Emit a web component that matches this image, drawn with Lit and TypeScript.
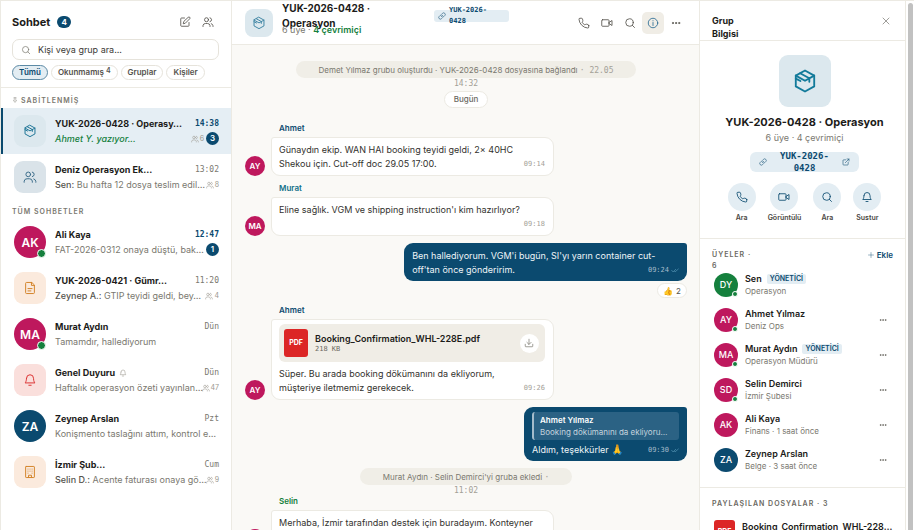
import { LitElement, html, css, svg, nothing, TemplateResult } from "lit";
import { customElement } from "lit/decorators.js";
import { classMap } from "lit/directives/class-map.js";

const paths: Record<string, TemplateResult> = {
  box: svg`<path d="M12 2.300 20.500 7v10L12 21.700 3.500 17V7z"/><path d="M3.500 7 12 11.800 20.500 7M7.500 4.800 16 9.500v3.200M3.500 9.800 7.800 12"/>`,
  edit: svg`<path d="M11 4H5a1.500 1.500 0 0 0-1.500 1.500V19A1.500 1.500 0 0 0 5 20.500h13.500A1.500 1.500 0 0 0 20 19v-6"/><path d="M18.500 2.500a2.100 2.100 0 0 1 3 3L12.500 14.500 8.500 15.500 9.500 11.500z"/>`,
  users: svg`<circle cx="9" cy="7.500" r="4"/><path d="M2 21v-2a5 5 0 0 1 5-4h4a5 5 0 0 1 5 4v2M16 3.600a4 4 0 0 1 0 7.800M18.500 15.300A5 5 0 0 1 22 19.500V21"/>`,
  search: svg`<circle cx="11" cy="11" r="7.500"/><path d="m16.500 16.500 4.500 4.500"/>`,
  pin: svg`<path d="M12 17v5M8 3h8M9 3v7l-3 4v2h12v-2l-3-4V3"/>`,
  doc: svg`<path d="M14.500 2.500H6A1.500 1.500 0 0 0 4.500 4v16A1.500 1.500 0 0 0 6 21.500h12a1.500 1.500 0 0 0 1.500-1.500V7.500z"/><path d="M14.500 2.500v5h5M8.500 13h7M8.500 17h5"/>`,
  bell: svg`<path d="M6 9a6 6 0 0 1 12 0c0 6 2.500 8 2.500 8h-17S6 15 6 9M10 21h4"/>`,
  building: svg`<rect x="4.500" y="2.500" width="15" height="19" rx="1"/><path d="M9.500 21v-3.500h5V21M8.500 7h.1M12 7h.1M15.500 7h.1M8.500 10.500h.1M12 10.500h.1M15.500 10.500h.1M8.500 14h.1M15.500 14h.1"/>`,
  phone: svg`<path d="M21.500 17v3a2 2 0 0 1-2.200 2A19 19 0 0 1 2 4.700 2 2 0 0 1 4 2.500h3a2 2 0 0 1 2 1.700c.1 1 .4 1.900.7 2.800a2 2 0 0 1-.5 2.100L8 10.300a16 16 0 0 0 5.800 5.700l1.200-1.200a2 2 0 0 1 2.100-.4c.9.300 1.800.5 2.800.700a2 2 0 0 1 1.600 1.900z"/>`,
  video: svg`<rect x="1.500" y="5.500" width="14.500" height="13" rx="1.500"/><path d="m16 11 6-4v10l-6-4z"/>`,
  info: svg`<circle cx="12" cy="12" r="9.500"/><path d="M12 11v6M12 7.300v.4"/>`,
  dots: svg`<g fill="currentColor"><circle cx="4.500" cy="12" r="1.500"/><circle cx="12" cy="12" r="1.500"/><circle cx="19.500" cy="12" r="1.500"/></g>`,
  link: svg`<path d="M10 13.500a5 5 0 0 0 7.300.3l3-3a4.800 4.800 0 0 0-6.800-6.800L12 5.500M14 10.500a5 5 0 0 0-7.300-.3l-3 3a4.800 4.800 0 0 0 6.800 6.800l1.500-1.500"/>`,
  external: svg`<path d="M18.500 13v6a2 2 0 0 1-2 2H5a2 2 0 0 1-2-2V7.500a2 2 0 0 1 2-2h6M15 3h6v6M10 14 21 3"/>`,
  download: svg`<path d="M21 15v4.500a1.500 1.500 0 0 1-1.500 1.500h-15A1.500 1.500 0 0 1 3 19.500V15M7 10.500l5 5 5-5M12 15V3"/>`,
  close: svg`<path d="M3 3l18 18M21 3 3 21"/>`,
  plus: svg`<path d="M12 2v20M2 12h20"/>`,
  checks: svg`<path d="m2 13 4.500 5L14 10M11 17l1 1 10-9"/>`,
};

const icon = (name: string, size: string) =>
  html`<svg class="i ${size}" viewBox="0 0 24 24" aria-hidden="true">${paths[name]}</svg>`;

const shared = css`
  *, *::after { box-sizing: border-box; }
  button { font: inherit; color: inherit; border: 0; background: none; padding: 0; margin: 0; cursor: pointer; }
  a { color: inherit; text-decoration: none; }
  h1, h2, h3, p, ul { margin: 0; padding: 0; font: inherit; list-style: none; }
  .i { display: block; flex: none; fill: none; stroke: currentColor; stroke-width: 1.7; stroke-linecap: round; stroke-linejoin: round; }
  .s6 { width: 6px; height: 6px; }
  .s8 { width: 8px; height: 8px; }
  .s10 { width: 10px; height: 10px; }
  .s12 { width: 12px; height: 12px; }
  .s14 { width: 14px; height: 14px; }
  .s26 { width: 26px; height: 26px; }
  .mono { font-family: "DejaVu Sans Mono", "Liberation Mono", monospace; }
  .ava { position: relative; display: grid; place-items: center; flex: none; border-radius: 50%; color: #fff; font-weight: 600; background: #be185d; }
  .navy { background: #0b4a6f; }
  .green { background: #15803d; }
  .on::after { content: ""; position: absolute; right: 0; bottom: 0; width: 9px; height: 9px; border-radius: 50%; border: 1px solid #fff; background: #15803d; }
  .ell { overflow: hidden; white-space: nowrap; text-overflow: ellipsis; }
`;

interface Chat {
  name: string; time: string; text: string; who?: string; initials?: string; tone?: string;
  icon?: string; online?: boolean; members?: number; unread?: number; active?: boolean; muted?: boolean;
}

const pinned: Chat[] = [
  { name: "YUK-2026-0428 · Operasy…", time: "14:38", text: "Ahmet Y. yazıyor...", icon: "box", tone: "teal", members: 6, unread: 3, active: true },
  { name: "Deniz Operasyon Ek…", time: "13:02", who: "Sen:", text: "Bu hafta 12 dosya teslim edil…", icon: "users", tone: "slate", members: 8 },
];
const chats: Chat[] = [
  { name: "Ali Kaya", time: "12:47", text: "FAT-2026-0312 onaya düştü, bak…", initials: "AK", tone: "", online: true, unread: 1 },
  { name: "YUK-2026-0421 · Gümr…", time: "11:20", who: "Zeynep A.:", text: "GTIP teyidi geldi, bey…", icon: "doc", tone: "amber", members: 4 },
  { name: "Murat Aydın", time: "Dün", text: "Tamamdır, hallediyorum", initials: "MA", tone: "", online: true },
  { name: "Genel Duyuru", time: "Dün", text: "Haftalık operasyon özeti yayınlan…", icon: "bell", tone: "rose", members: 47, muted: true },
  { name: "Zeynep Arslan", time: "Pzt", text: "Konişmento taslağını attım, kontrol e…", initials: "ZA", tone: "navy" },
  { name: "İzmir Şub…", time: "Cum", who: "Selin D.:", text: "Acente faturası onaya gö…", icon: "building", tone: "amber", members: 9 },
];

@customElement("chat-list")
export class ChatList extends LitElement {
  static styles = [shared, css`
    :host { display: block; background: #fff; border-right: 1px solid #eceae3; overflow: hidden; }
    .top { padding: 10px 12px 7px 11px; border-bottom: 1px solid #eceae3; }
    .head { display: flex; align-items: center; height: 22px; }
    h1 { font-size: 11px; font-weight: 700; }
    .count { margin-left: 7px; width: 14px; height: 12px; line-height: 12px; border-radius: 6px; background: #0b4a6f; color: #fff; font-size: 8px; font-weight: 700; text-align: center; }
    .tools { margin-left: auto; display: flex; gap: 1px; color: #55534d; }
    .tools button { width: 22px; height: 22px; display: grid; place-items: center; }
    .search { margin-top: 6px; height: 21px; display: flex; align-items: center; gap: 7px; padding: 0 8px; border: 1px solid #e6e3db; border-radius: 7px; color: #7a786f; }
    input { flex: 1; min-width: 0; border: 0; outline: 0; padding: 0; background: none; font: 9px Inter, sans-serif; color: #1c1b19; }
    input::placeholder { color: #3b3a36; opacity: 1; }
    .chips { display: flex; gap: 3px; margin-top: 5px; }
    .chips button { height: 15px; padding: 0 6px; border: 1px solid #e6e3db; border-radius: 8px; font-size: 8px; line-height: 13px; font-weight: 600; color: #55534d; white-space: nowrap; }
    .chips .sel { background: #e3edf3; border-color: #5c8aa5; color: #0b4a6f; }
    sup { font-size: 7px; line-height: 0; vertical-align: 2px; }
    .label { display: flex; align-items: center; gap: 3px; height: 20px; padding: 4px 11px 0; font-size: 7px; font-weight: 600; letter-spacing: 1px; color: #7a786f; }
    .label.next { height: 19px; }
    .row { display: flex; align-items: center; gap: 9px; width: 100%; height: 46px; padding: 0 12px 0 13px; text-align: left; }
    .active { background: #e5eef4; box-shadow: inset 2px 0 #0b4a6f; }
    .pic { width: 32px; height: 32px; display: grid; place-items: center; flex: none; border-radius: 9px; font-size: 12px; }
    .pic.ava { border-radius: 50%; }
    .teal { background: #dce8ee; color: #1f7597; }
    .slate { background: #dae3e9; color: #3b6c8a; }
    .amber { background: #fbeadd; color: #d3852a; }
    .rose { background: #fadfdc; color: #dc3434; }
    .body { flex: 1; min-width: 0; }
    .line { display: flex; align-items: center; height: 15px; gap: 2px; white-space: nowrap; }
    .name { font-size: 9px; font-weight: 700; color: #1c1b19; }
    .time { margin-left: auto; font-size: 8px; color: #7a786f; }
    .time.new { color: #0b4a6f; font-weight: 700; }
    .msg { flex: 1; font-size: 9px; color: #7a786f; min-width: 0; }
    .msg b { font-weight: 500; color: #55534d; }
    .active .msg { color: #15803d; font-style: italic; font-weight: 500; }
    .mem { display: flex; align-items: center; gap: 1px; font-size: 7px; color: #9b988f; }
    .unread { width: 13px; height: 13px; line-height: 13px; border-radius: 50%; background: #0b4a6f; color: #fff; font-size: 8px; font-weight: 600; text-align: center; }
    .muted { margin-left: 2px; color: #9b988f; }
  `];

  private row(c: Chat) {
    return html`<li><button class=${classMap({ row: true, active: !!c.active })}>
      ${c.icon
        ? html`<span class="pic ${c.tone}">${icon(c.icon, "s14")}</span>`
        : html`<span class="pic ava ${c.tone} ${c.online ? "on" : ""}">${c.initials}</span>`}
      <span class="body">
        <span class="line"><span class="name">${c.name}</span>${c.muted ? html`<span class="muted">${icon("bell", "s8")}</span>` : nothing}
          <span class="time mono ${c.unread ? "new" : ""}">${c.time}</span></span>
        <span class="line"><span class="msg">${c.who ? html`<b>${c.who}</b> ` : nothing}${c.text}</span>
          ${c.members ? html`<span class="mem">${icon("users", "s8")}${c.members}</span>` : nothing}
          ${c.unread ? html`<span class="unread">${c.unread}</span>` : nothing}</span>
      </span>
    </button></li>`;
  }

  render() {
    return html`
      <div class="top">
        <div class="head"><h1>Sohbet</h1><span class="count">4</span>
          <div class="tools"><button aria-label="Yeni sohbet">${icon("edit", "s12")}</button><button aria-label="Yeni grup">${icon("users", "s12")}</button></div>
        </div>
        <label class="search">${icon("search", "s10")}<input type="search" aria-label="Kişi veya grup ara" placeholder="Kişi veya grup ara..." /></label>
        <div class="chips"><button class="sel">Tümü</button><button>Okunmamış <sup>4</sup></button><button>Gruplar</button><button>Kişiler</button></div>
      </div>
      <h2 class="label">${icon("pin", "s6")}SABİTLENMİŞ</h2>
      <ul>${pinned.map((c) => this.row(c))}</ul>
      <h2 class="label next">TÜM SOHBETLER</h2>
      <ul>${chats.map((c) => this.row(c))}</ul>`;
  }
}

@customElement("chat-thread")
export class ChatThread extends LitElement {
  static styles = [shared, css`
    :host { display: flex; flex-direction: column; min-width: 0; background: #faf9f6; overflow: hidden; }
    header { display: flex; align-items: center; gap: 9px; height: 44px; flex: none; padding: 0 12px 0 13px; background: #fff; border-bottom: 1px solid #eceae3; }
    .pic { width: 28px; height: 28px; flex: none; display: grid; place-items: center; border-radius: 8px; background: #dce8ee; color: #4388a5; }
    .title { width: 143px; height: 44px; }
    h1 { height: 21px; font-size: 10px; line-height: 15px; font-weight: 700; width: 100px; }
    .sub { font-size: 9px; line-height: 15px; color: #7a786f; }
    .sub b { font-weight: 600; color: #15803d; }
    .ref { width: 75px; height: 12px; margin-top: -13px; display: flex; align-items: center; gap: 3px; padding: 0 4px; border-radius: 3px; background: #e3edf3; color: #0b4a6f; font-size: 7px; line-height: 11px; font-weight: 700; }
    .ref span { width: 45px; }
    .acts { margin-left: auto; display: flex; gap: 1px; color: #55534d; }
    .acts button { width: 22px; height: 22px; display: grid; place-items: center; border-radius: 5px; }
    .acts .sel { background: #f0ede6; color: #2b6c93; }
    .log { flex: 1; min-height: 0; overflow: hidden; padding: 16px 12px 0 13px; display: flex; flex-direction: column; }
    .log > * { flex: none; }
    .sys { align-self: center; height: 17px; padding: 3px 18px 0; border-radius: 9px; background: #f0eee7; text-align: center; font-size: 8px; line-height: 12px; color: #7a786f; }
    .sys .mono { color: #a3a097; }
    .sys.long { width: 77%; }
    .sys.short { width: 48%; }
    .day { align-self: center; margin: 13px 0 15px; height: 17px; line-height: 15px; padding: 0 9px; border: 1px solid #eceae3; border-radius: 9px; background: #fff; font-size: 8px; font-weight: 500; color: #6a6861; }
    .msg { display: flex; align-items: flex-end; gap: 6px; margin-bottom: 7px; }
    .msg .ava { width: 20px; height: 20px; font-size: 8px; }
    .col { flex: 1; min-width: 0; display: flex; flex-direction: column; align-items: flex-start; }
    .who { height: 14px; padding-left: 8px; font-size: 8px; line-height: 11px; font-weight: 600; color: #0b4a6f; }
    .teal { color: #127089; }
    .green-t { color: #15803d; }
    .bub { max-width: 68%; padding: 5px 8px 4px 7px; border: 1px solid #eceae3; border-radius: 3px 9px 9px 9px; background: #fff; font-size: 9px; line-height: 14px; color: #33322e; }
    .time { float: right; margin-left: 8px; font-size: 7px; color: #a3a097; display: flex; align-items: center; gap: 2px; }
    .out { flex-direction: column; gap: 2px; }
    .out .bub { max-width: 64%; padding: 6px 8px 4px; border: 0; border-radius: 9px 3px 9px 9px; background: #0b4a6f; color: #eef4f7; }
    .out .time { color: #a5bccb; }
    .out .time .i { color: #67a7c4; }
    .emoji { font-size: 10px; line-height: 1; }
    .react { height: 15px; display: flex; align-items: center; gap: 3px; padding: 0 5px; border: 1px solid #eceae3; border-radius: 8px; background: #fff; font-size: 8px; color: #55534d; }
    .file { display: flex; align-items: center; gap: 7px; width: 266px; max-width: 100%; height: 38px; margin: -1px 0 5px; padding: 0 6px 0 5px; border-radius: 6px; background: #f0ede6; line-height: 11px; }
    .pdf { width: 24px; height: 28px; line-height: 28px; border-radius: 3px; background: #dc2626; color: #fff; font-size: 7px; font-weight: 700; text-align: center; }
    .fn { font-weight: 600; color: #1c1b19; }
    .fs { font-size: 7px; line-height: 10px; color: #6a6861; }
    .dl { margin-left: auto; width: 19px; height: 19px; display: grid; place-items: center; border-radius: 50%; background: #fff; color: #7a786f; }
    .quote { width: 147px; height: 28px; margin: -1px 0 3px; padding: 2px 6px; border-left: 2px solid #a5bccb; border-radius: 3px; background: #2b6284; font-size: 8px; line-height: 12px; color: #c5d4de; }
    .quote b { display: block; color: #fff; font-weight: 600; }
    .gap { margin-top: 11px; }
  `];

  private meta(t: string, sent = false) {
    return html`<span class="time"><time class="mono">${t}</time>${sent ? icon("checks", "s8") : nothing}</span>`;
  }

  render() {
    return html`
      <header>
        <span class="pic">${icon("box", "s14")}</span>
        <div class="title"><h1>YUK-2026-0428 · Operasyon</h1><p class="sub">6 üye · <b>4 çevrimiçi</b></p></div>
        <a class="ref mono" href="#ref">${icon("link", "s8")}<span>YUK-2026-<br>0428</span></a>
        <div class="acts">
          <button aria-label="Ara">${icon("phone", "s12")}</button>
          <button aria-label="Görüntülü">${icon("video", "s12")}</button>
          <button aria-label="Mesajlarda ara">${icon("search", "s12")}</button>
          <button class="sel" aria-label="Bilgi">${icon("info", "s12")}</button>
          <button aria-label="Diğer">${icon("dots", "s10")}</button>
        </div>
      </header>
      <div class="log">
        <p class="sys long">Demet Yılmaz grubu oluşturdu · YUK-2026-0428 dosyasına bağlandı <span class="mono">· 22.05<br>14:32</span></p>
        <p class="day">Bugün</p>
        <div class="msg"><span class="ava">AY</span><div class="col"><span class="who">Ahmet</span>
          <div class="bub">Günaydın ekip. WAN HAI booking teyidi geldi, 2× 40HC Shekou için. Cut-off doc 29.05 17:00.${this.meta("09:14")}</div></div></div>
        <div class="msg"><span class="ava">MA</span><div class="col"><span class="who teal">Murat</span>
          <div class="bub">Eline sağlık. VGM ve shipping instruction'ı kim hazırlıyor?${this.meta("09:18")}</div></div></div>
        <div class="msg out"><div class="bub">Ben hallediyorum. VGM'i bugün, SI'yı yarın container cut-off'tan önce gönderirim.${this.meta("09:24", true)}</div>
          <button class="react"><span>👍</span><span>2</span></button></div>
        <div class="msg"><span class="ava">AY</span><div class="col"><span class="who">Ahmet</span>
          <div class="bub"><div class="file"><span class="pdf">PDF</span><div><p class="fn">Booking_Confirmation_WHL-228E.pdf</p><p class="fs mono">218 KB</p></div>
            <button class="dl" aria-label="İndir">${icon("download", "s10")}</button></div>
            Süper. Bu arada booking dökümanını da ekliyorum,<br>müşteriye iletmemiz gerekecek.${this.meta("09:26")}</div></div></div>
        <div class="msg out"><div class="bub"><div class="quote"><b class="ell">Ahmet Yılmaz</b><p>Booking dökümanını da ekliyoru…</p></div>
          Aldım, teşekkürler <span class="emoji">🙏</span>${this.meta("09:30", true)}</div></div>
        <p class="sys short">Murat Aydın · Selin Demirci'yi gruba ekledi <span class="mono">·<br>11:02</span></p>
        <div class="msg gap"><span class="ava">SD</span><div class="col"><span class="who green-t">Selin</span>
          <div class="bub">Merhaba, İzmir tarafından destek için buradayım. Konteyner çıkışını takip ediyorum.${this.meta("11:04")}</div></div></div>
      </div>`;
  }
}

const members = [
  { i: "DY", n: "Sen", r: "Operasyon", admin: true, on: true, tone: "green", me: true },
  { i: "AY", n: "Ahmet Yılmaz", r: "Deniz Ops", on: true, tone: "" },
  { i: "MA", n: "Murat Aydın", r: "Operasyon Müdürü", admin: true, on: true, tone: "" },
  { i: "SD", n: "Selin Demirci", r: "İzmir Şubesi", on: true, tone: "" },
  { i: "AK", n: "Ali Kaya", r: "Finans · 1 saat önce", tone: "" },
  { i: "ZA", n: "Zeynep Arslan", r: "Belge · 3 saat önce", tone: "navy" },
];

@customElement("group-info")
export class GroupInfo extends LitElement {
  static styles = [shared, css`
    :host { display: block; background: #fff; border-left: 1px solid #eceae3; border-right: 1px solid #eceae3; overflow: hidden; }
    header { display: flex; align-items: flex-start; justify-content: space-between; height: 40px; padding: 13px 14px 0 12px; border-bottom: 1px solid #eceae3; }
    h2 { width: 40px; font-size: 9px; line-height: 13px; font-weight: 700; color: #1c1b19; }
    header button { width: 10px; height: 14px; display: grid; place-items: center; color: #55534d; }
    .hero { display: flex; flex-direction: column; align-items: center; height: 198px; padding: 14px 0 0 4px; border-bottom: 1px solid #eceae3; }
    .pic { width: 52px; height: 52px; display: grid; place-items: center; border-radius: 9px; background: #dce8ee; color: #127a9a; }
    h1 { margin-top: 6px; font-size: 11px; line-height: 18px; font-weight: 700; }
    .sub { font-size: 9px; line-height: 14px; color: #7a786f; }
    .ref { margin-top: 7px; width: 109px; height: 20px; display: flex; align-items: center; justify-content: space-between; padding: 0 9px; border-radius: 6px; background: #e3edf3; color: #0b4a6f; font-size: 9px; line-height: 12px; font-weight: 700; text-align: center; }
    .acts { display: flex; gap: 12px; margin-top: 11px; }
    .acts button { display: flex; flex-direction: column; align-items: center; gap: 2px; min-width: 28px; font-size: 7px; line-height: 10px; font-weight: 600; color: #4a4843; }
    .acts span { width: 28px; height: 28px; display: grid; place-items: center; border-radius: 50%; background: #e3edf3; color: #0b4a6f; }
    .sec { padding: 10px 12px; border-bottom: 1px solid #eceae3; }
    .head { display: flex; justify-content: space-between; height: 18px; }
    .head h3 { width: 44px; }
    h3 { font-size: 7px; line-height: 11px; font-weight: 600; letter-spacing: 1px; color: #6a6861; }
    .add { display: flex; align-items: center; gap: 3px; height: 11px; font-size: 8px; font-weight: 600; color: #0b4a6f; }
    li { display: flex; align-items: center; gap: 7px; height: 35px; padding: 0 6px 0 2px; }
    .ava { width: 24px; height: 24px; font-size: 9px; font-weight: 500; }
    .on::after { width: 6px; height: 6px; }
    .n { display: flex; align-items: center; gap: 5px; font-size: 9px; line-height: 12px; font-weight: 600; color: #1c1b19; }
    .n em { height: 10px; line-height: 10px; padding: 0 3px; border-radius: 2px; background: #e3edf3; color: #0b4a6f; font-size: 7px; font-style: normal; }
    .r { font-size: 8px; line-height: 12px; color: #7a786f; }
    li button { margin-left: auto; color: #6a6861; }
    .file { display: flex; gap: 7px; padding: 11px 2px 0; }
    .pdf { width: 21px; height: 24px; line-height: 24px; border-radius: 3px; background: #dc2626; color: #fff; font-size: 7px; font-weight: 700; text-align: center; flex: none; }
    .fn { font-size: 9px; line-height: 14px; font-weight: 600; color: #1c1b19; white-space: nowrap; }
  `];

  render() {
    return html`
      <header><h2>Grup Bilgisi</h2><button aria-label="Kapat">${icon("close", "s8")}</button></header>
      <section class="hero">
        <span class="pic">${icon("box", "s26")}</span>
        <h1>YUK-2026-0428 · Operasyon</h1>
        <p class="sub">6 üye · 4 çevrimiçi</p>
        <a class="ref mono" href="#ref">${icon("link", "s8")}<span>YUK-2026-<br>0428</span>${icon("external", "s8")}</a>
        <div class="acts">
          <button><span>${icon("phone", "s12")}</span>Ara</button>
          <button><span>${icon("video", "s12")}</span>Görüntülü</button>
          <button><span>${icon("search", "s12")}</span>Ara</button>
          <button><span>${icon("bell", "s12")}</span>Sustur</button>
        </div>
      </section>
      <section class="sec">
        <div class="head"><h3>ÜYELER · 6</h3><button class="add">${icon("plus", "s6")}Ekle</button></div>
        <ul>${members.map((m) => html`<li><span class="ava ${m.tone} ${m.on ? "on" : ""}">${m.i}</span>
          <div><p class="n">${m.n}${m.admin ? html`<em>YÖNETİCİ</em>` : nothing}</p><p class="r">${m.r}</p></div>
          ${m.me ? nothing : html`<button aria-label="Diğer">${icon("dots", "s8")}</button>`}</li>`)}</ul>
      </section>
      <section class="sec">
        <h3>PAYLAŞILAN DOSYALAR · 3</h3>
        <div class="file"><span class="pdf">PDF</span><span class="fn">Booking_Confirmation_WHL-228…</span></div>
      </section>`;
  }
}

@customElement("app-root")
export class AppRoot extends LitElement {
  static styles = css`
    :host { display: grid; grid-template-columns: 231px minmax(0, 1fr) 207px 8px; grid-template-rows: minmax(0, 1fr); height: 100vh; box-sizing: border-box; border-top: 1px solid #eceae3; border-left: 1px solid #eceae3; overflow: hidden; font-family: Inter, "Noto Sans", sans-serif; color: #1c1b19; background: #fff; }
    .scroll { margin: 2px 1px 0 2px; border-radius: 3px 3px 0 0; background: #c1c1c1; }
  `;
  render() {
    return html`<chat-list></chat-list><chat-thread></chat-thread><group-info></group-info><div class="scroll"></div>`;
  }
}
